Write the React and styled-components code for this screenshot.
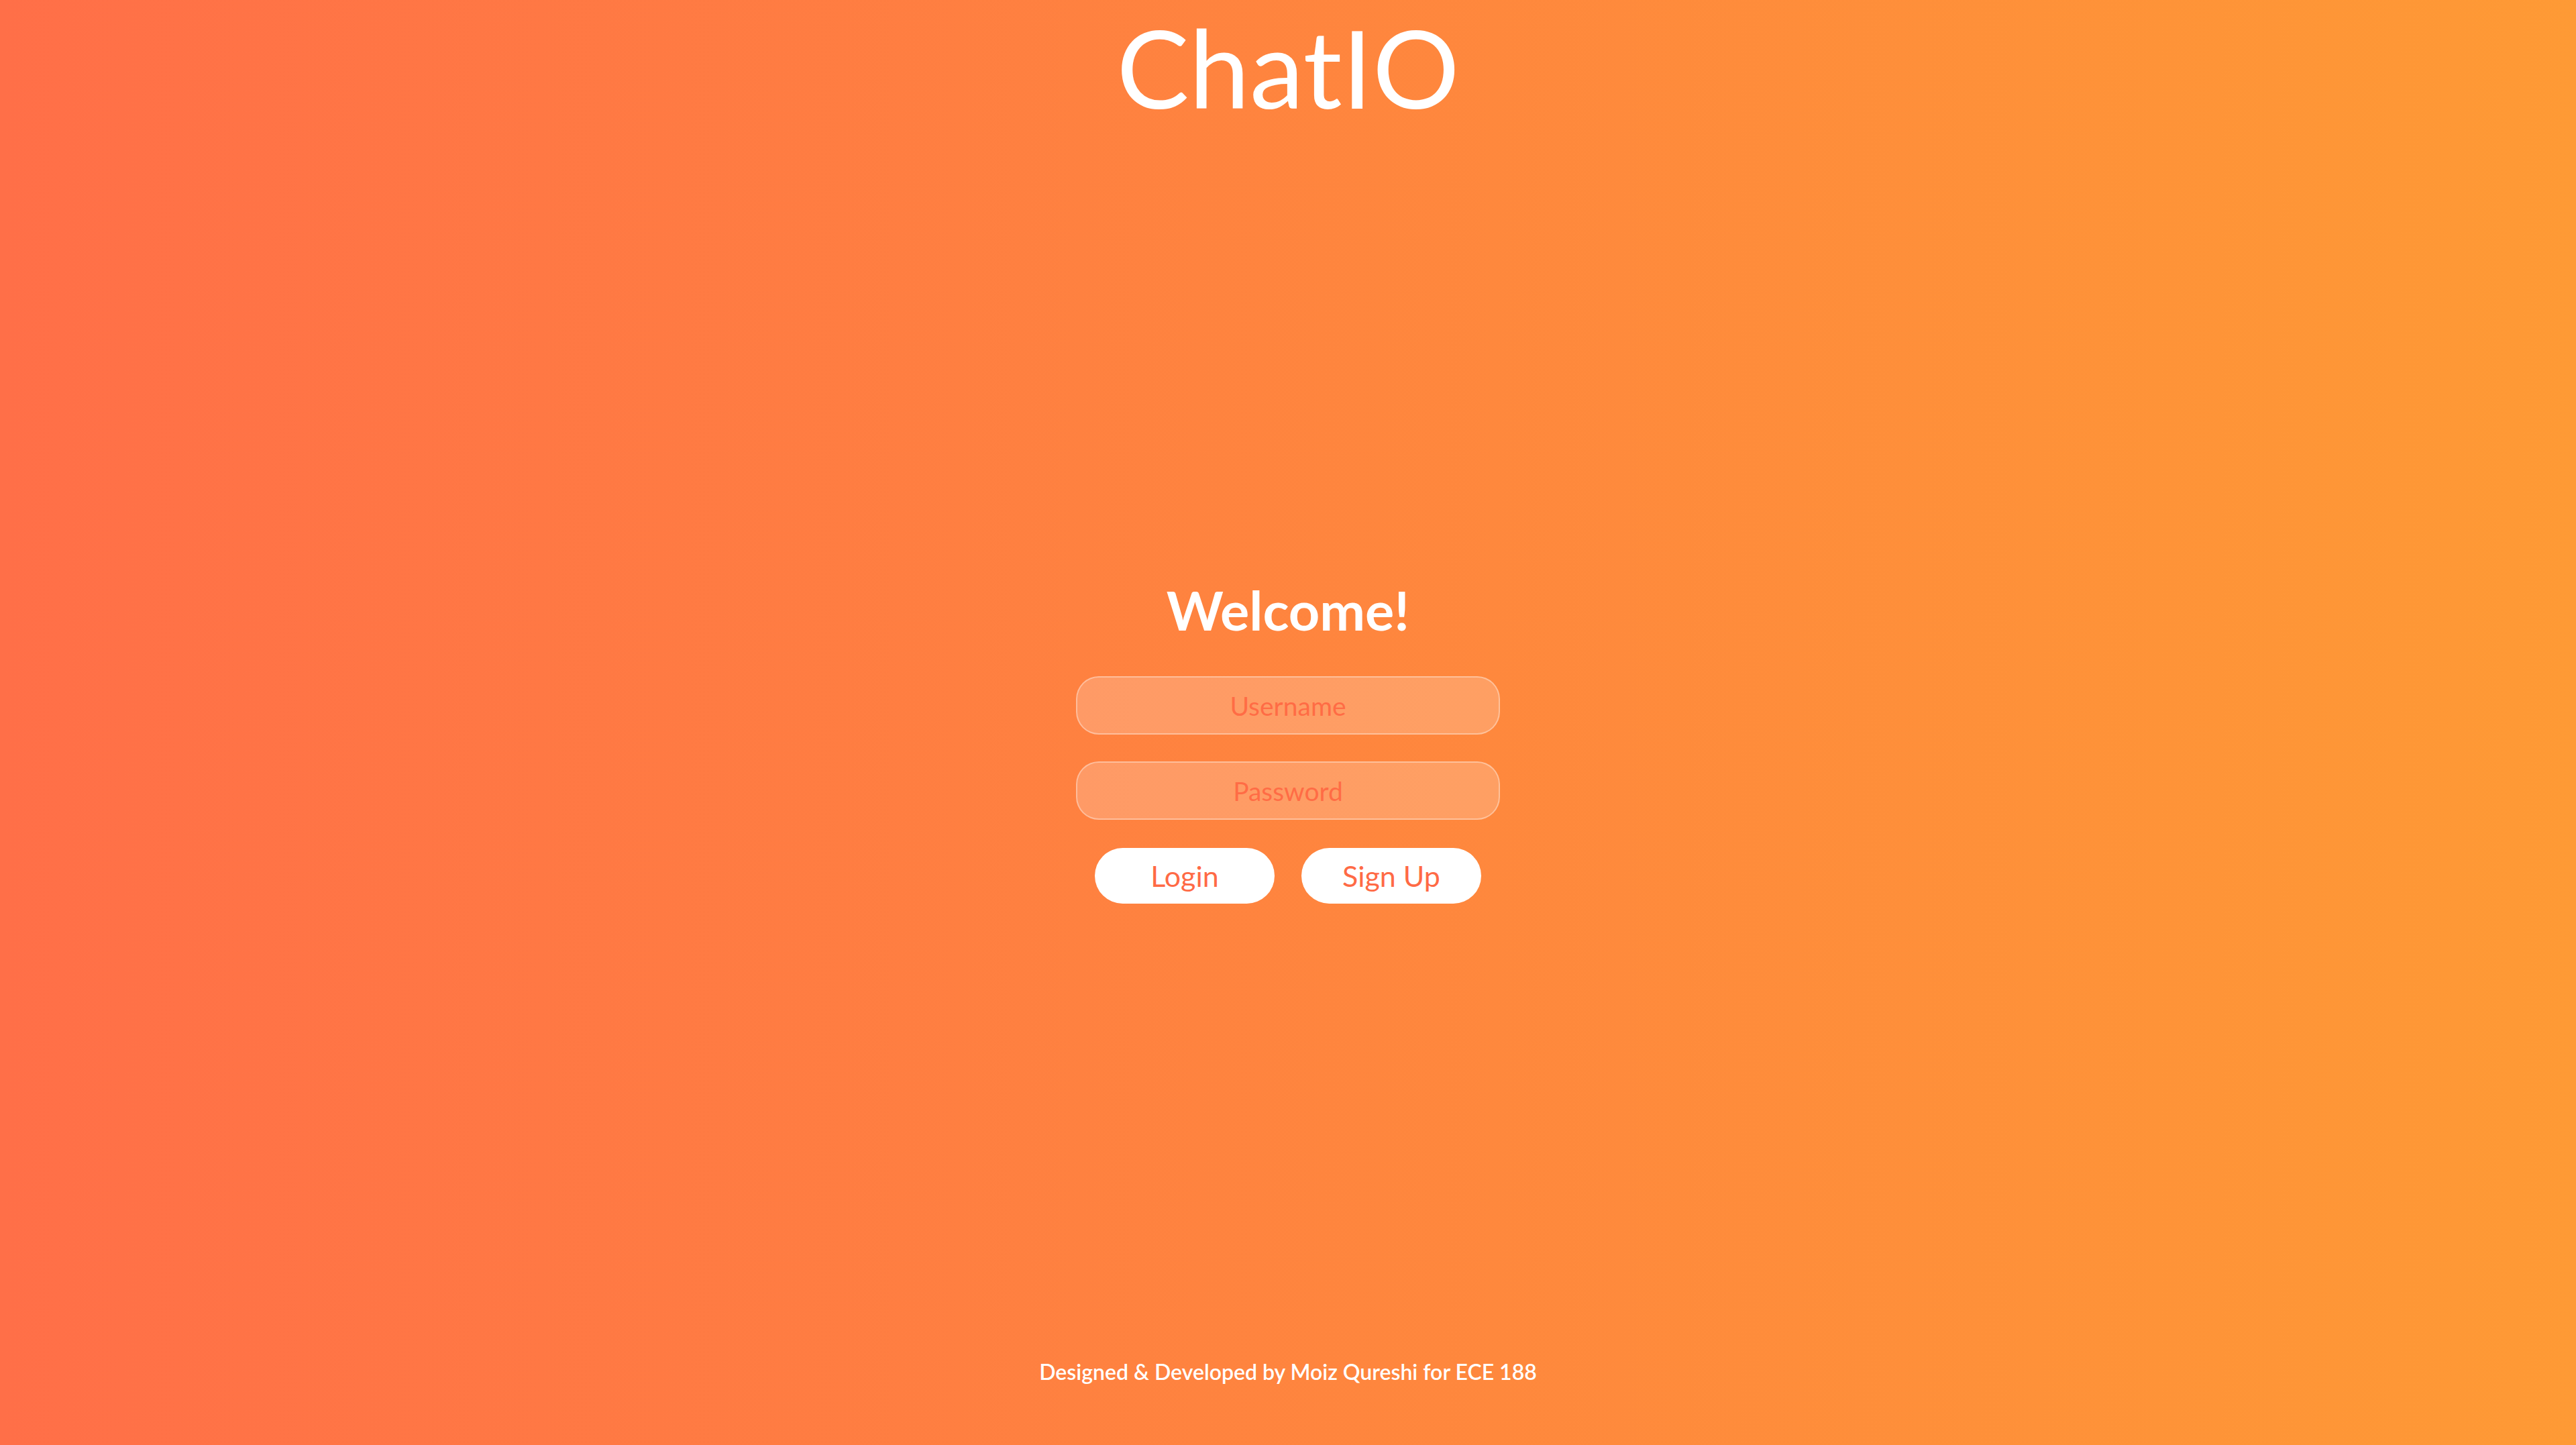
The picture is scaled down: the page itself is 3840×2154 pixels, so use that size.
import React, { useState } from 'react';
import styled, { createGlobalStyle } from 'styled-components';

const GlobalStyle = createGlobalStyle`
	* {
		box-sizing: border-box;
	}
	html, body {
		margin: 0;
		padding: 0;
	}
	body {
		font-family: Lato, 'Open Sans', sans-serif;
	}
`;

export default function App() {
	const [username, setUsername] = useState('');
	const [password, setPassword] = useState('');

	return (
		<Page>
			<GlobalStyle />
			<Title>ChatIO</Title>
			<Main>
				<Welcome>Welcome!</Welcome>
				<Field
					type="text"
					placeholder="Username"
					value={username}
					onChange={(e) => setUsername(e.target.value)}
				/>
				<Field
					type="password"
					placeholder="Password"
					value={password}
					onChange={(e) => setPassword(e.target.value)}
				/>
				<BtnRow>
					<PillBtn>Login</PillBtn>
					<PillBtn>Sign Up</PillBtn>
				</BtnRow>
			</Main>
			<Footer>Designed &amp; Developed by Moiz Qureshi for ECE 188</Footer>
		</Page>
	);
}

const Page = styled.div`
	display: flex;
	flex-direction: column;
	align-items: center;
	height: 100vh;
	background: linear-gradient(to right, #ff6f48, #fe9a35);
	color: #fff;
	overflow: hidden;
`;

const Title = styled.h1`
	margin: 0;
	padding-top: 2px;
	font-family: Lato, sans-serif;
	font-weight: 400;
	font-size: 162px;
	line-height: 196px;
`;

const Main = styled.main`
	flex: 1;
	display: flex;
	flex-direction: column;
	align-items: center;
	justify-content: center;
	padding-bottom: 17px;
`;

const Welcome = styled.h2`
	margin: 0 0 49px 0;
	font-family: Lato, sans-serif;
	font-weight: 700;
	font-size: 81px;
	line-height: 100px;
`;

const Field = styled.input`
	width: 632px;
	height: 87px;
	margin-bottom: 40px;
	border: 2px solid rgba(255, 255, 255, 0.35);
	border-radius: 34px;
	background: rgba(255, 255, 255, 0.2);
	color: #ff6a45;
	font-family: Lato, sans-serif;
	font-size: 39px;
	text-align: center;
	outline: none;
	&::placeholder {
		color: #ff6c45;
	}
`;

const BtnRow = styled.div`
	display: flex;
	gap: 40px;
	margin-top: 2px;
`;

const PillBtn = styled.button`
	width: 268px;
	height: 83px;
	border: none;
	border-radius: 42px;
	background-color: #fff;
	color: #ff6a45;
	font-family: Lato, sans-serif;
	font-size: 43px;
	cursor: pointer;
`;

const Footer = styled.footer`
	margin-bottom: 90px;
	font-family: Lato, sans-serif;
	font-weight: 600;
	font-size: 32px;
`;
